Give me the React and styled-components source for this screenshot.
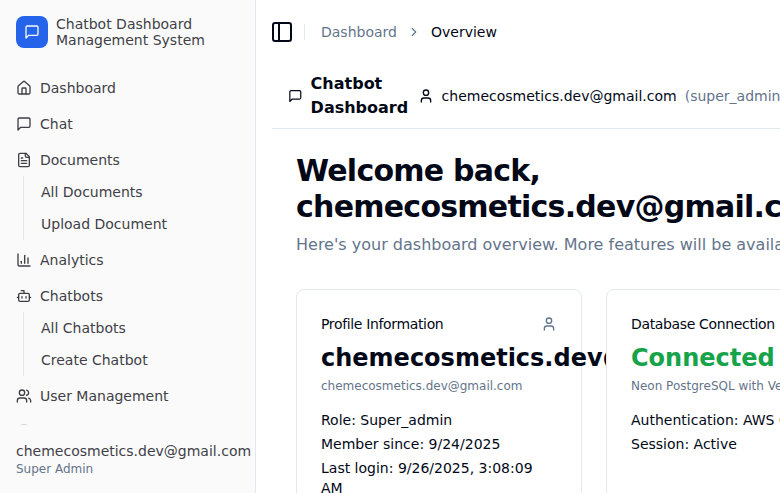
import React from "react";
import styled, { createGlobalStyle } from "styled-components";
import { House, ChartColumn, Bot, Users, PanelLeft, ChevronRight, User, Database } from "lucide-react";

const GlobalStyle = createGlobalStyle`
  *, *::before, *::after { box-sizing: border-box; }
  html, body { margin: 0; height: 100%; overflow: hidden; }
  body {
    background: #fff;
    color: #020817;
    font: 14px/20px "DejaVu Sans", sans-serif;
  }
  h1, h2, h3, p { margin: 0; padding: 0; }
  svg { display: block; flex-shrink: 0; }
`;

const Shell = styled.div`
  display: flex;
  height: 100vh;
  overflow: hidden;
`;

const Sidebar = styled.aside`
  display: flex;
  flex-direction: column;
  flex: 0 0 256px;
  width: 256px;
  min-width: 0;
  background: #fafafa;
  border-right: 1px solid #e2e6f0;
  color: #3f3f46;
`;

const Brand = styled.div`
  display: flex;
  align-items: center;
  gap: 8px;
  height: 64px;
  padding: 0 16px;
  line-height: 16px;
`;

const Logo = styled.div`
  display: grid;
  place-items: center;
  width: 32px;
  height: 32px;
  border-radius: 8px;
  background: #2563eb;
  color: #f8fafc;
`;

const Nav = styled.nav`
  display: flex;
  flex-direction: column;
  flex: 1;
  gap: 4px;
  min-height: 0;
  padding: 8px;
  overflow: hidden;
`;

const NavItem = styled.div`
  display: flex;
  align-items: center;
  gap: 8px;
  height: 32px;
  padding: 0 8px;
  white-space: nowrap;
`;

const SubMenu = styled.div`
  margin-left: 15px;
  padding-left: 17px;
  border-left: 1px solid #e4e6ee;
`;

const SubItem = styled.div`
  display: flex;
  align-items: center;
  height: 32px;
`;

const Account = styled.div`
  height: 68px;
  padding: 16px 0 16px 16px;
  white-space: nowrap;
`;

const Muted = styled.p`
  color: #64748b;
  font-size: 12px;
  line-height: 16px;
  white-space: nowrap;
`;

const Main = styled.main`
  flex: 1;
  min-width: 0;
  overflow: hidden;
`;

const TopBar = styled.header`
  display: flex;
  align-items: center;
  gap: 8px;
  height: 64px;
  padding: 0 12px;
`;

const ToggleButton = styled.button`
  display: grid;
  place-items: center;
  width: 28px;
  height: 28px;
  padding: 0;
  border: 0;
  background: none;
  color: inherit;
`;

const Divider = styled.span`
  width: 1px;
  height: 16px;
  margin-right: 8px;
  background: #e2e8f0;
`;

const Crumbs = styled.div`
  display: flex;
  align-items: center;
  gap: 10px;
  color: #64748b;
`;

const Current = styled.span`
  color: #020817;
`;

const Content = styled.div`
  width: 930px;
  padding-left: 16px;
`;

const AppHeader = styled.div`
  display: flex;
  align-items: center;
  gap: 8px;
  height: 65px;
  padding: 0 16px;
  border-bottom: 1px solid #e2e8f0;
  white-space: nowrap;
`;

const AppName = styled.h2`
  width: 99px;
  font-size: 16px;
  line-height: 24px;
  font-weight: 700;
  white-space: normal;
`;

const Role = styled.span`
  color: #64748b;
`;

const Body = styled.div`
  padding: 24px;
`;

const Title = styled.h1`
  width: 520px;
  font-size: 30px;
  line-height: 36px;
  font-weight: 700;
  letter-spacing: -0.025em;
`;

const Lead = styled.p`
  margin: 8px 0 32px;
  color: #64748b;
  font-size: 16px;
  line-height: 24px;
`;

const Cards = styled.div`
  display: grid;
  grid-template-columns: repeat(2, 286px);
  gap: 24px;
`;

const Card = styled.section`
  min-width: 0;
  height: 290px;
  padding: 24px;
  border: 1px solid #e2e8f0;
  border-radius: 8px;
  background: #fff;
`;

const CardHead = styled.div`
  display: flex;
  align-items: center;
  justify-content: space-between;
  margin-bottom: 8px;
  color: #64748b;
`;

const CardTitle = styled.h3`
  color: #020817;
  font-size: 14px;
  line-height: 20px;
  font-weight: 500;
  letter-spacing: -0.025em;
`;

const Value = styled.div`
  margin-bottom: 4px;
  color: ${(p) => (p.$ok ? "#16a34a" : "inherit")};
  font-size: 24px;
  line-height: 32px;
  font-weight: 700;
`;

const Facts = styled.div`
  display: grid;
  gap: 4px;
  margin-top: 16px;
`;

const Glyph = ({ size = 16, height = size, children }) => (
  <svg width={size} height={height} viewBox="0 0 24 24" fill="none" stroke="currentColor" strokeWidth="2" strokeLinecap="round" strokeLinejoin="round">
    {children}
  </svg>
);

const Chat = (props) => (
  <Glyph {...props}>
    <path d="M21 15a2 2 0 0 1-2 2H7l-4 4V5a2 2 0 0 1 2-2h14a2 2 0 0 1 2 2z" />
  </Glyph>
);

const Document = (props) => (
  <Glyph {...props}>
    <path d="M15 2H6a2 2 0 0 0-2 2v16a2 2 0 0 0 2 2h12a2 2 0 0 0 2-2V7Z" />
    <path d="M14 2v4a2 2 0 0 0 2 2h4" />
    <path d="M10 9H8" />
    <path d="M16 13H8" />
    <path d="M16 17H8" />
  </Glyph>
);

const menu = [
  { label: "Dashboard", icon: House },
  { label: "Chat", icon: Chat },
  { label: "Documents", icon: Document, items: ["All Documents", "Upload Document"] },
  { label: "Analytics", icon: ChartColumn },
  { label: "Chatbots", icon: Bot, items: ["All Chatbots", "Create Chatbot"] },
  { label: "User Management", icon: Users },
  { label: "Database", icon: Database },
];

const email = "chemecosmetics.dev@gmail.com";

const cards = [
  {
    title: "Profile Information",
    icon: User,
    value: email,
    note: email,
    facts: ["Role: Super_admin", "Member since: 9/24/2025", "Last login: 9/26/2025, 3:08:09 AM"],
  },
  {
    title: "Database Connection",
    icon: Database,
    value: "Connected",
    ok: true,
    note: "Neon PostgreSQL with Vercel",
    facts: ["Authentication: AWS Cognito", "Session: Active"],
  },
];

export default function App() {
  return (
    <Shell>
      <GlobalStyle />
      <Sidebar>
        <Brand>
          <Logo><Chat /></Logo>
          <div>Chatbot Dashboard<br />Management System</div>
        </Brand>
        <Nav>
          {menu.map(({ label, icon: Icon, items }) => (
            <div key={label}>
              <NavItem><Icon size={16} />{label}</NavItem>
              {items && <SubMenu>{items.map((t) => <SubItem key={t}>{t}</SubItem>)}</SubMenu>}
            </div>
          ))}
        </Nav>
        <Account>
          <div>{email}</div>
          <Muted>Super Admin</Muted>
        </Account>
      </Sidebar>
      <Main>
        <TopBar>
          <ToggleButton aria-label="Toggle sidebar"><PanelLeft size={24} /></ToggleButton>
          <Divider />
          <Crumbs>
            <span>Dashboard</span>
            <ChevronRight size={14} />
            <Current>Overview</Current>
          </Crumbs>
        </TopBar>
        <Content>
          <AppHeader>
            <Chat size={14.6} height={24} />
            <AppName>Chatbot Dashboard</AppName>
            <User size={16} />
            <span>{email}</span>
            <Role>(super_admin)</Role>
          </AppHeader>
          <Body>
            <Title>Welcome back, {email}</Title>
            <Lead>Here's your dashboard overview. More features will be available soon.</Lead>
            <Cards>
              {cards.map(({ title, icon: Icon, value, ok, note, facts }) => (
                <Card key={title}>
                  <CardHead>
                    <CardTitle>{title}</CardTitle>
                    <Icon size={16} />
                  </CardHead>
                  <Value $ok={ok}>{value}</Value>
                  <Muted>{note}</Muted>
                  <Facts>{facts.map((f) => <div key={f}>{f}</div>)}</Facts>
                </Card>
              ))}
            </Cards>
          </Body>
        </Content>
      </Main>
    </Shell>
  );
}
